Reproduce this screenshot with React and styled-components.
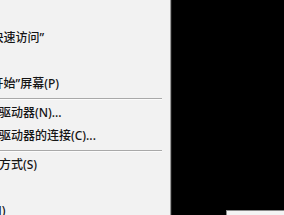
import React from "react";
import styled, { createGlobalStyle } from "styled-components";

const Global = createGlobalStyle`
  html, body { margin: 0; padding: 0; background: #000; overflow: hidden; }
  #root { width: 284px; height: 215px; overflow: hidden; }
`;

const Screen = styled.div`
  display: flex;
  width: 284px;
  height: 215px;
  overflow: hidden;
  background: #000;
`;

const Menu = styled.ul`
  list-style: none;
  margin: 0 0 0 -82px;
  padding: 3px 0 0 0;
  width: 252px;
  flex: none;
  background: #f2f2f2;
  border-right: 1px solid #9a9a9a;
  box-shadow: 1px 0 0 #1e1e1e;
  font-family: "Noto Sans", "Noto Sans CJK SC", sans-serif;
  font-size: 12px;
  font-weight: 500;
  color: #151515;
`;

const Item = styled.li`
  height: 23px;
  line-height: 23px;
  padding-left: 33px;
  white-space: nowrap;
`;

const Separator = styled.li`
  height: 6px;
  display: flex;
  align-items: center;
  padding-left: 30px;
  padding-right: 8px;
  &::before {
    content: "";
    flex: 1;
    height: 1px;
    background: #a9a9a9;
    box-shadow: 0 1px 0 #fcfcfc;
  }
`;

const Desktop = styled.div`
  flex: 1;
  display: flex;
  flex-direction: column;
  justify-content: flex-end;
  align-items: flex-end;
  margin-left: 1px;
`;

const WindowCorner = styled.div`
  width: 57px;
  height: 4px;
  background: #f4f4f4;
  border-top: 1px solid #8a8a8a;
  border-left: 1px solid #8a8a8a;
`;

const groups = [
  ["打开(O)", "固定到“快速访问”", "管理(G)", "固定到“开始”屏幕(P)"],
  ["映射网络驱动器(N)...", "断开网络驱动器的连接(C)..."],
  ["创建快捷方式(S)", "删除(D)", "重命名(M)"],
  ["属性(R)"],
];

export default function App() {
  return (
    <>
      <Global />
      <Screen>
        <Menu>
          {groups.map((g, gi) => (
            <React.Fragment key={gi}>
              {gi > 0 && <Separator />}
              {g.map((t) => (
                <Item key={t}>{t}</Item>
              ))}
            </React.Fragment>
          ))}
        </Menu>
        <Desktop>
          <WindowCorner />
        </Desktop>
      </Screen>
    </>
  );
}
